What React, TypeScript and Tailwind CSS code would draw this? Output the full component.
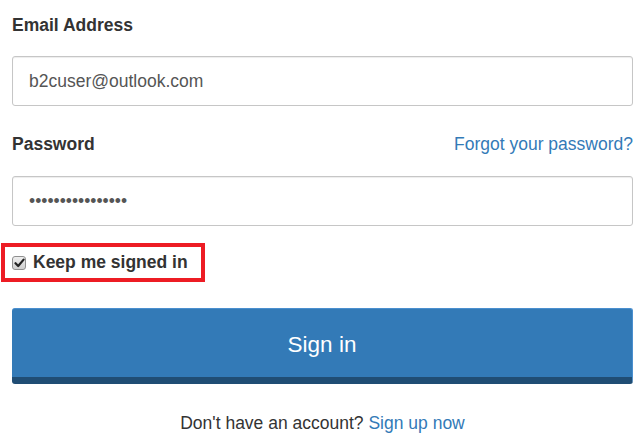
import type {JSX} from 'react';

const font = {fontFamily: '"Liberation Sans", Arial, sans-serif'};

function CheckMark(): JSX.Element {
    return (
        <span
            className="flex h-[14px] w-[14px] items-center justify-center rounded-[3px] border border-[#8f8f8f] bg-gradient-to-b from-[#eeeeee] to-[#cfcfcf]">
            <svg width="11" height="10" viewBox="0 0 11 10">
                <path d="M1.5 5.2 L4.2 8 L9.6 1.6" fill="none" stroke="#222" strokeWidth="2.2"
                      strokeLinecap="round" strokeLinejoin="round"/>
            </svg>
        </span>
    );
}

function App(): JSX.Element {
    return (
        <div className="h-[444px] w-[644px] overflow-hidden bg-white pl-3 pr-[11px] pt-[12px] text-[17.5px]"
             style={font}>
            <label className="block h-[26px] font-bold leading-[26px] text-[#333]">Email Address</label>
            <div
                className="mt-[18px] flex h-[50px] items-center rounded-[3px] border border-[#c6c6c6] pl-4 text-[#555] shadow-[inset_0_1px_1px_rgba(0,0,0,0.075)]">
                b2cuser@outlook.com
            </div>

            <div className="mt-[25px] flex h-[26px] items-center justify-between leading-[26px]">
                <label className="font-bold text-[#333]">Password</label>
                <a className="text-[#337ab7]">Forgot your password?</a>
            </div>
            <div
                className="mt-[19px] flex h-[50px] items-center rounded-[3px] border border-[#c6c6c6] pl-4 text-[#555] shadow-[inset_0_1px_1px_rgba(0,0,0,0.075)]">
                ••••••••••••••••
            </div>

            <div
                className="-ml-[11px] mt-[17px] inline-flex h-[39px] items-center gap-[7px] border-4 border-[#ed1c24] pl-[7px] pr-[13px]">
                <CheckMark/>
                <span className="font-bold text-[#333]">Keep me signed in</span>
            </div>

            <button
                className="mt-[26px] flex h-[76px] w-full items-center justify-center rounded-[3px] border-t border-r border-[#4a8fcf] border-b-[7px] border-b-[#204d74] bg-[#337ab7] pt-[4px] text-[22.5px] text-white">
                Sign in
            </button>

            <p className="mt-[26px] text-center text-[#333]">
                Don't have an account? <a className="text-[#337ab7]">Sign up now</a>
            </p>
        </div>
    );
}

export default App;
